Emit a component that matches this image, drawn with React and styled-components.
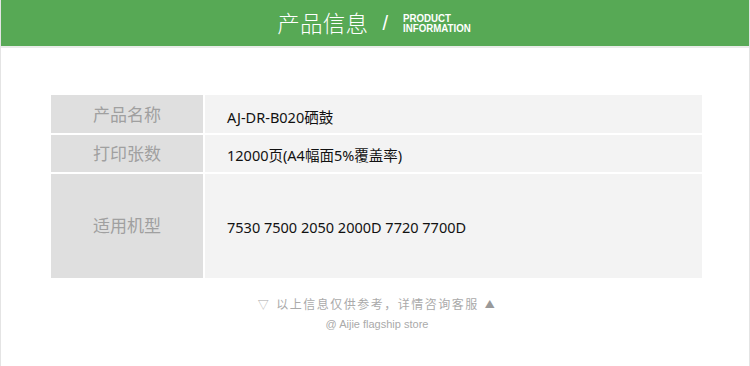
import React from "react"
import styled, { createGlobalStyle } from "styled-components"

const GlobalStyle = createGlobalStyle`
  html, body {
    margin: 0;
    padding: 0;
    background: #fff;
  }
  body {
    font-family: "Noto Sans", "Noto Sans CJK SC", sans-serif;
  }
`

const Page = styled.div`
  width: 750px;
  height: 366px;
  box-sizing: border-box;
  border-left: 1px solid #e4e4e4;
  border-right: 1px solid #e4e4e4;
  overflow: hidden;
`

const Header = styled.div`
  height: 46px;
  background: #57a955;
  border-bottom: 2px solid #e9ece9;
  display: flex;
  align-items: center;
  justify-content: center;
  color: #fff;
  padding-left: 0px;
`

const Title = styled.span`
  font-family: "Noto Sans CJK SC", sans-serif;
  font-weight: 300;
  font-size: 22.5px;
  letter-spacing: 0.3px;
  line-height: 1;
  margin-top: -1px;
`

const Slash = styled.span`
  font-family: "Liberation Sans", sans-serif;
  font-size: 20px;
  font-weight: 300;
  margin: 0 15px 0 14px;
`

const EnTitle = styled.div`
  font-family: "Liberation Sans", sans-serif;
  font-size: 10px;
  font-weight: 700;
  line-height: 10px;
  transform: scaleX(0.97);
  transform-origin: left center;
  margin-top: 1px;
  margin-right: 0px;
`

const Table = styled.div`
  margin: 47px 0 0 50px;
  width: 651px;
  display: grid;
  grid-template-columns: 152px 1fr;
  grid-template-rows: 38px 37px 104px;
  gap: 2px;
`

const Label = styled.div`
  background: #dfdfdf;
  color: #a0a0a0;
  font-family: "Noto Sans CJK SC", sans-serif;
  font-size: 17px;
  display: flex;
  align-items: center;
  justify-content: center;
  padding-bottom: ${p => (p.$tall ? 4 : 2)}px;
`

const Value = styled.div`
  background: #f3f3f3;
  color: #111;
  font-family: "Noto Sans", "Noto Sans CJK SC", sans-serif;
  font-size: 14.5px;
  display: flex;
  align-items: center;
  padding-left: 22px;
  padding-top: ${p => (p.$top || 0)}px;
`

const Footer = styled.div`
  margin-top: 16px;
  display: flex;
  flex-direction: column;
  align-items: center;
  color: #aaa;
  font-family: "Noto Sans CJK SC", sans-serif;
  padding-left: 4px;
`

const Note = styled.div`
  font-size: 12px;
  line-height: 18px;
  letter-spacing: 1.5px;
  display: flex;
  align-items: center;
  gap: 6px;
  margin-top: 1px;
`

const Arrow = styled.span`
  font-size: ${p => p.$size}px;
  color: ${p => p.$color};
`

const Store = styled.div`
  font-family: "Liberation Sans", sans-serif;
  font-size: 11px;
  line-height: 16px;
  margin-top: 3px;
`

const rows = [
  { label: "产品名称", value: "AJ-DR-B020硒鼓", top: 5 },
  { label: "打印张数", value: "12000页(A4幅面5%覆盖率)", top: 2 },
  { label: "适用机型", value: "7530 7500 2050 2000D 7720 7700D", top: 2, tall: true },
]

export default function App() {
  return (
    <Page>
      <GlobalStyle />
      <Header>
        <Title>产品信息</Title>
        <Slash>/</Slash>
        <EnTitle>
          PRODUCT
          <br />
          INFORMATION
        </EnTitle>
      </Header>
      <Table>
        {rows.map(r => (
          <React.Fragment key={r.label}>
            <Label $tall={r.tall}>{r.label}</Label>
            <Value $top={r.top}>{r.value}</Value>
          </React.Fragment>
        ))}
      </Table>
      <Footer>
        <Note>
          <Arrow $size={11} $color="#aaa">▽</Arrow>
          以上信息仅供参考，详情咨询客服
          <Arrow $size={10} $color="#999">▲</Arrow>
        </Note>
        <Store>@ Aijie flagship store</Store>
      </Footer>
    </Page>
  )
}
